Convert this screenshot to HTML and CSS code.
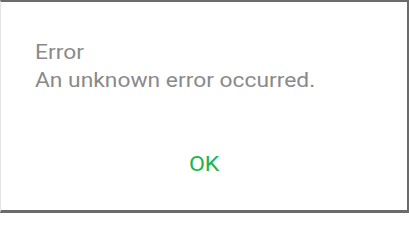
FILE: index.html
```html
<!DOCTYPE html>
<html>
<head>
<meta charset="utf-8">
<link rel="stylesheet" href="styles.css">
</head>
<body>
<div class="dialog">
  <div class="content">
    <div class="title">Error</div>
    <div class="message">An unknown error occurred.</div>
  </div>
  <div class="actions">
    <button class="ok">OK</button>
  </div>
</div>
</body>
</html>
```
FILE: styles.css
```css
html, body {
  margin: 0;
  padding: 0;
  background: #ffffff;
}
.dialog {
  box-sizing: border-box;
  width: 409px;
  height: 213px;
  overflow: hidden;
  border-top: 2px solid #6b6b6b;
  border-right: 2px solid #6b6b6b;
  border-bottom: 3px solid #6b6b6b;
  border-left: 1px solid #e4e4e4;
  display: flex;
  flex-direction: column;
  font-family: Roboto, "Liberation Sans", sans-serif;
}
.content {
  align-self: flex-start;
  margin: 36px 0 0 34px;
  color: #8a8a8a;
  font-size: 20px;
  line-height: 28px;
  transform: scaleX(1.14);
  transform-origin: 0 0;
}
.actions {
  display: flex;
  justify-content: center;
  padding-top: 56px;
  padding-left: 1px;
}
.ok {
  border: none;
  background: none;
  padding: 0;
  font-family: inherit;
  font-size: 20px;
  line-height: 28px;
  color: #22b545;
  transform: scaleX(1.16);
}
```
